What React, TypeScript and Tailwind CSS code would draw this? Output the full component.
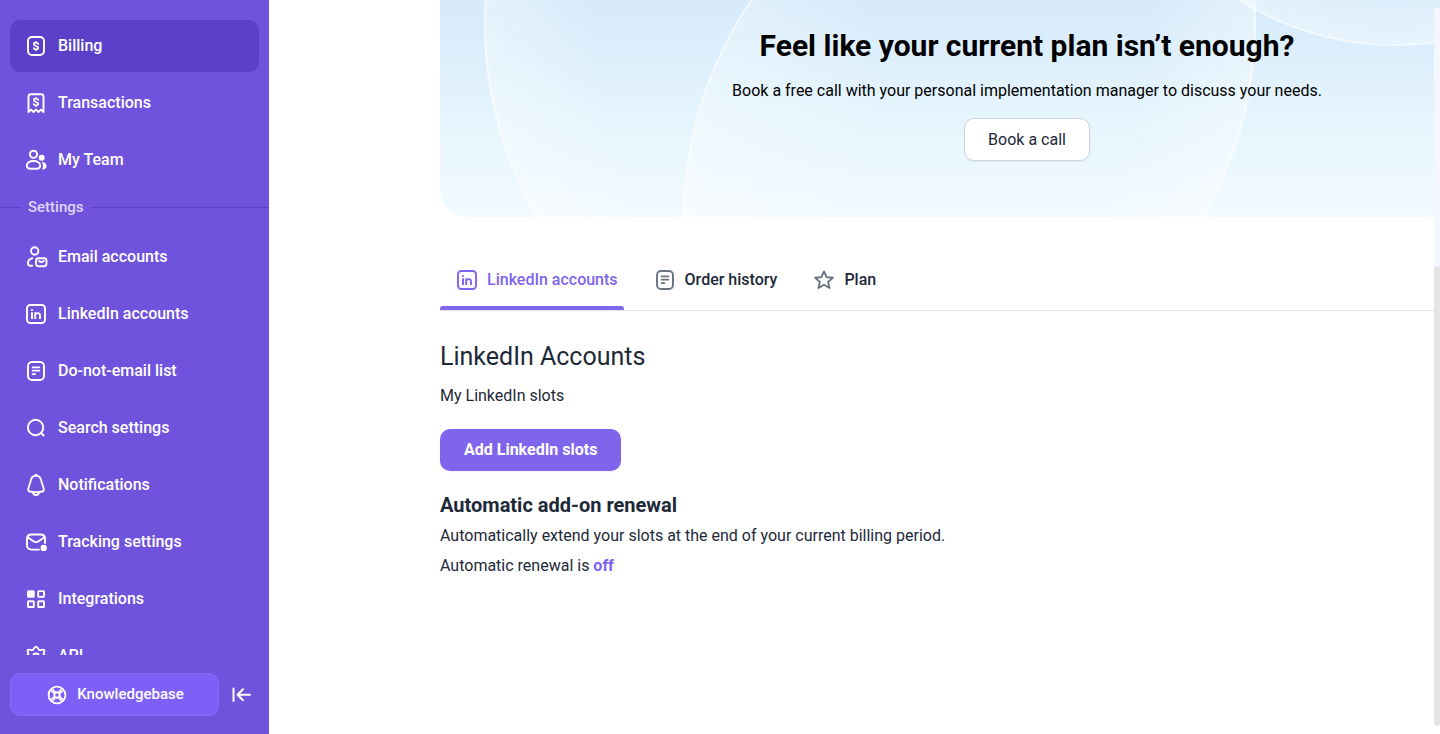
import type { ReactNode } from 'react'

interface NavItem {
    label: string;
    icon: ReactNode;
    active?: boolean;
}

function Icon({ children }: { children: ReactNode }) {
    return (
        <svg
            className="size-6 shrink-0"
            viewBox="0 0 24 24"
            fill="none"
            stroke="currentColor"
            strokeWidth="1.9"
            strokeLinecap="round"
            strokeLinejoin="round"
            aria-hidden="true"
        >
            {children}
        </svg>
    )
}

const BillingIcon = () => (
    <Icon>
        <rect x="4" y="3" width="16" height="18" rx="4" />
        <path strokeWidth="1.7" d="M14.300 10.100c-.3-.9-1.200-1.400-2.300-1.400-1.300 0-2.200.6-2.200 1.600 0 2.300 4.500 1.300 4.500 3.500 0 1-.9 1.600-2.300 1.600-1.200 0-2.100-.5-2.400-1.400M12 7.800v.8M12 15.600v.7" />
    </Icon>
)

const TransactionsIcon = () => (
    <Icon>
        <path d="M4.500 21V5.700c0-1.600.8-2.400 2.400-2.400h10.200c1.600 0 2.400.8 2.400 2.400V21l-2.500-2.400-2.500 2.400-2.500-2.400-2.500 2.400-2.500-2.400z" />
        <path strokeWidth="1.700" d="M14.300 9.100c-.3-.9-1.200-1.400-2.300-1.400-1.300 0-2.200.6-2.200 1.600 0 2.300 4.500 1.300 4.500 3.500 0 1-.9 1.600-2.300 1.600-1.200 0-2.100-.5-2.400-1.400M12 6.800v.8M12 14.600v.7" />
    </Icon>
)

const TeamIcon = () => (
    <Icon>
        <circle cx="9.500" cy="6.300" r="3.600" />
        <path d="M9.500 13c-4 0-6.700 1.900-6.700 4.600 0 2.300 1.500 3.200 3.500 3.200h6.400c2 0 3.500-.9 3.500-3.200 0-2.700-2.700-4.600-6.700-4.600z" />
        <circle cx="17.700" cy="9.800" r="3" fill="currentColor" stroke="none" />
        <path d="M17.500 13.800c3 .2 5 2 5 4.300 0 2-1.300 3.400-3.600 3.400h-.8c.6-1 .9-2.100.9-3.400 0-1.700-.5-3.100-1.500-4.300z" fill="currentColor" stroke="none" />
    </Icon>
)

const EmailAccountsIcon = () => (
    <Icon>
        <circle cx="10.700" cy="6" r="3.700" />
        <path d="M8.400 13.200C5.600 14 4 16 4 18.200c0 1.500.9 2.500 2.500 2.500h1.700" />
        <rect x="12" y="13.200" width="10.500" height="8" rx="2.500" />
        <path strokeWidth="1.700" d="M14.800 16c1.500 1.300 3.400 1.300 4.900 0" />
    </Icon>
)

const LinkedInIcon = () => (
    <Icon>
        <rect x="3" y="3" width="18" height="18" rx="3.200" />
        <path strokeLinecap="butt" d="M8 10.200v6.800M11.200 17v-6.800M11.200 13.300c0-1.300.9-2.200 2.400-2.200s2.400.9 2.400 2.400V17" />
        <circle cx="8" cy="8" r="1.100" fill="currentColor" stroke="none" />
    </Icon>
)

const ListIcon = () => (
    <Icon>
        <rect x="4" y="3" width="16" height="18" rx="4" />
        <path strokeWidth="1.700" d="M8.600 8.300h6.800M8.600 11.700h6.800M8.600 15.200h2.600" />
    </Icon>
)

const SearchIcon = () => (
    <Icon>
        <circle cx="11.600" cy="11.500" r="7.700" />
        <path d="M17.300 17.200l2.300 2.300" />
    </Icon>
)

const BellIcon = () => (
    <Icon>
        <path d="M12 2.600c-3.200 0-4.900 2.500-5.400 5.600-.5 3.200-2.400 5.600-2.400 8.200 0 1.700 1 2.200 2.600 2.400 3.500.5 6.900.5 10.400 0 1.600-.2 2.600-.7 2.600-2.400 0-2.600-1.900-5-2.400-8.200-.5-3.100-2.200-5.600-5.400-5.600z" />
        <path d="M9 19.800c.6 2.900 5.400 2.900 6 0" />
        <circle cx="12" cy="2.300" r="1.500" fill="currentColor" stroke="none" />
    </Icon>
)

const TrackingIcon = () => (
    <Icon>
        <path d="M15 19.600H7.500c-3 0-4.500-1.500-4.500-4.500V9c0-3 1.500-4.500 4.500-4.500h9c3 0 4.500 1.500 4.500 4.500v4" />
        <path d="M3.600 7.300l5.800 4c1.700 1.200 3.500 1.200 5.200 0l5.800-4" />
        <circle cx="19.700" cy="17.900" r="3.200" fill="currentColor" stroke="none" />
    </Icon>
)

const IntegrationsIcon = () => (
    <Icon>
        <rect x="4" y="4.100" width="5.800" height="5.800" rx="0.600" fill="currentColor" />
        <rect x="14.200" y="4.100" width="5.800" height="5.800" rx="0.600" />
        <rect x="4" y="14.200" width="5.800" height="5.800" rx="0.600" />
        <rect x="14.200" y="14.200" width="5.800" height="5.800" rx="0.600" />
    </Icon>
)

const GearIcon = () => (
    <Icon>
        <path d="M12 2.600c1.700 0 1.700 2.700 3.500 3.400 1.800.6 3.600-1.300 4.700.1 1 1.300-1 2.700-.5 4.300.4 1.300 2 .6 2 2s-1.600 1-2 2.300c-.5 1.600 1.500 3 .5 4.300-1.100 1.400-2.900-.5-4.700.1-1.800.7-1.800 3.400-3.500 3.400s-1.700-2.700-3.500-3.400c-1.800-.6-3.600 1.300-4.700-.1-1-1.300 1-2.700.5-4.300-.4-1.300-2-.9-2-2.300s1.600-.7 2-2c.5-1.600-1.500-3-.5-4.300 1.100-1.400 2.900.5 4.700-.1 1.800-.7 1.800-3.400 3.500-3.400z" />
        <circle cx="12" cy="12.500" r="3" />
    </Icon>
)

const LifebuoyIcon = () => (
    <Icon>
        <circle cx="12" cy="12" r="8.400" />
        <circle cx="12" cy="12" r="2.700" />
        <path strokeWidth="1.500" d="M6 7.600l3.700 3M7.600 6l3 3.700M18 7.600l-3.700 3M16.400 6l-3 3.700M6 16.400l3.700-3M7.600 18l3-3.700M18 16.400l-3.700-3M16.400 18l-3-3.700" />
    </Icon>
)

const CollapseIcon = () => (
    <Icon>
        <path strokeWidth="2" d="M3.500 5.500V18M20 11.800H8M13 6.300l-5.500 5.500 5.500 5.500" />
    </Icon>
)

const StarIcon = () => (
    <Icon>
        <path d="M12 3.400l2.600 5.700 6.200.6-4.700 4.200 1.400 6.100-5.500-3.200-5.500 3.200 1.400-6.100-4.700-4.200 6.200-.6z" />
    </Icon>
)

const mainItems: NavItem[] = [
    { label: "Billing", icon: <BillingIcon />, active: true },
    { label: "Transactions", icon: <TransactionsIcon /> },
    { label: "My Team", icon: <TeamIcon /> },
]

const settingsItems: NavItem[] = [
    { label: "Email accounts", icon: <EmailAccountsIcon /> },
    { label: "LinkedIn accounts", icon: <LinkedInIcon /> },
    { label: "Do-not-email list", icon: <ListIcon /> },
    { label: "Search settings", icon: <SearchIcon /> },
    { label: "Notifications", icon: <BellIcon /> },
    { label: "Tracking settings", icon: <TrackingIcon /> },
    { label: "Integrations", icon: <IntegrationsIcon /> },
    { label: "API", icon: <GearIcon /> },
]

const tabs: NavItem[] = [
    { label: "LinkedIn accounts", icon: <LinkedInIcon />, active: true },
    { label: "Order history", icon: <ListIcon /> },
    { label: "Plan", icon: <StarIcon /> },
]

function NavList({ items }: { items: NavItem[] }) {
    return (
        <ul className="flex flex-col gap-[5px] px-2.5">
            {items.map((item) => (
                <li key={item.label}>
                    <a
                        href="#"
                        aria-current={item.active ? "page" : undefined}
                        className={`flex h-[52px] items-center gap-2.5 rounded-[10px] px-3.5 font-medium ${item.active ? "bg-[#5b41c9]" : ""}`}
                    >
                        {item.icon}
                        {item.label}
                    </a>
                </li>
            ))}
        </ul>
    )
}

function Sidebar() {
    return (
        <aside className="flex w-[269px] shrink-0 flex-col bg-[#6f53dd] text-white">
            <nav className="min-h-0 flex-1 overflow-hidden pt-5">
                <NavList items={mainItems} />
                <div className="mt-[11px] mb-3.5 flex items-center text-[15px] leading-5 font-medium text-[#ddd6f8]">
                    <span className="h-px w-[22px] bg-[#5b41c9]" />
                    <span className="px-1.5">Settings</span>
                    <span className="h-px flex-1 bg-[#5b41c9]" />
                </div>
                <NavList items={settingsItems} />
            </nav>

            {/* Footer */}
            <div className="flex items-center gap-[11px] px-2.5 pt-[18px] pb-[18px]">
                <button className="flex h-[43px] w-[209px] items-center justify-center gap-2 rounded-[10px] border border-[#876bf9] bg-[#7e60f7] text-[15px] font-medium">
                    <LifebuoyIcon />
                    Knowledgebase
                </button>
                <button aria-label="Collapse sidebar">
                    <CollapseIcon />
                </button>
            </div>
        </aside>
    )
}

function BannerArt() {
    return (
        <svg className="absolute inset-0 size-full" viewBox="0 0 1174 217" preserveAspectRatio="xMidYMid slice" aria-hidden="true">
            <defs>
                <radialGradient id="bubble">
                    <stop offset="0.72" stopColor="#fff" stopOpacity="0" />
                    <stop offset="1" stopColor="#fff" stopOpacity="0.35" />
                </radialGradient>
                {/* Only the left half of this bubble shows */}
                <linearGradient id="halfFill">
                    <stop offset="0" stopColor="#fff" stopOpacity="0.35" />
                    <stop offset="0.25" stopColor="#fff" stopOpacity="0" />
                </linearGradient>
                <linearGradient id="halfStroke">
                    <stop offset="0.2" stopColor="#fff" stopOpacity="0.6" />
                    <stop offset="0.5" stopColor="#fff" stopOpacity="0" />
                </linearGradient>
            </defs>
            <g strokeWidth="2">
                <circle cx="430" cy="24" r="385" fill="url(#bubble)" stroke="#fff" strokeOpacity="0.6" />
                <circle cx="629" cy="218" r="385" fill="url(#halfFill)" stroke="url(#halfStroke)" />
                <circle cx="956" cy="-251" r="296" fill="url(#bubble)" stroke="#fff" strokeOpacity="0.6" />
            </g>
        </svg>
    )
}

export default function App() {
    return (
        <div className="flex h-screen overflow-hidden bg-white font-[Roboto,sans-serif] text-base text-[#1d2939]">
            <Sidebar />

            <main className="relative min-w-0 flex-1 overflow-hidden">
                <div className="ml-[171px] mr-[6px] min-w-[1174px]">
                    {/* Banner */}
                    <section className="relative overflow-hidden rounded-b-[28px] bg-linear-to-b from-[#d6eafa] via-[#e4f4fd] to-[#f2faff] text-black">
                        <BannerArt />
                        <div className="relative flex flex-col items-center pt-7 pb-[56px]">
                            <h1 className="text-[30px] leading-9 font-bold">Feel like your current plan isn’t enough?</h1>
                            <p className="mt-[15px] leading-6">Book a free call with your personal implementation manager to discuss your needs.</p>
                            <button className="mt-[15px] h-[43px] rounded-[10px] border border-[#cfd4e0] bg-white px-[23px] text-[#1d2939] shadow-xs">
                                Book a call
                            </button>
                        </div>
                    </section>

                    {/* Tabs */}
                    <div role="tablist" className="mt-[33px] flex gap-3.5 border-b border-[#e4e4e7]">
                        {tabs.map((tab) => (
                            <button
                                key={tab.label}
                                role="tab"
                                aria-selected={!!tab.active}
                                className={`flex flex-col font-medium ${tab.active ? "text-[#7f64ec]" : ""}`}
                            >
                                <span className="flex h-[56px] items-center gap-2 pt-1 pr-1.5 pl-[15px]">
                                    <span className={tab.active ? "" : "text-[#6b7280]"}>{tab.icon}</span>
                                    {tab.label}
                                </span>
                                <span className={`h-1 w-full rounded-t-[3px] ${tab.active ? "bg-[#7f64ec]" : ""}`} />
                            </button>
                        ))}
                    </div>

                    <section>
                        <h2 className="mt-[30px] text-[25px] leading-8">LinkedIn Accounts</h2>
                        <p className="mt-[11px] leading-6">My LinkedIn slots</p>
                        <button className="mt-[21px] h-[42px] rounded-[10px] bg-[#7f64ec] px-6 font-bold text-white shadow-xs">
                            Add LinkedIn slots
                        </button>
                        <h3 className="mt-5 text-xl leading-7 font-bold">Automatic add-on renewal</h3>
                        <p className="mt-[5px] leading-6">Automatically extend your slots at the end of your current billing period.</p>
                        <p className="mt-1.5 leading-6">
                            Automatic renewal is <a href="#" className="font-bold text-[#7f64ec]">off</a>
                        </p>
                    </section>
                </div>

                {/* Scrollbar */}
                <div className="absolute top-2 right-0 bottom-2 flex w-1.5 flex-col justify-end rounded-full bg-[#f4f7ff]">
                    <div className="h-[64%] rounded-full bg-[#e4e4e4]" />
                </div>
            </main>
        </div>
    )
}
